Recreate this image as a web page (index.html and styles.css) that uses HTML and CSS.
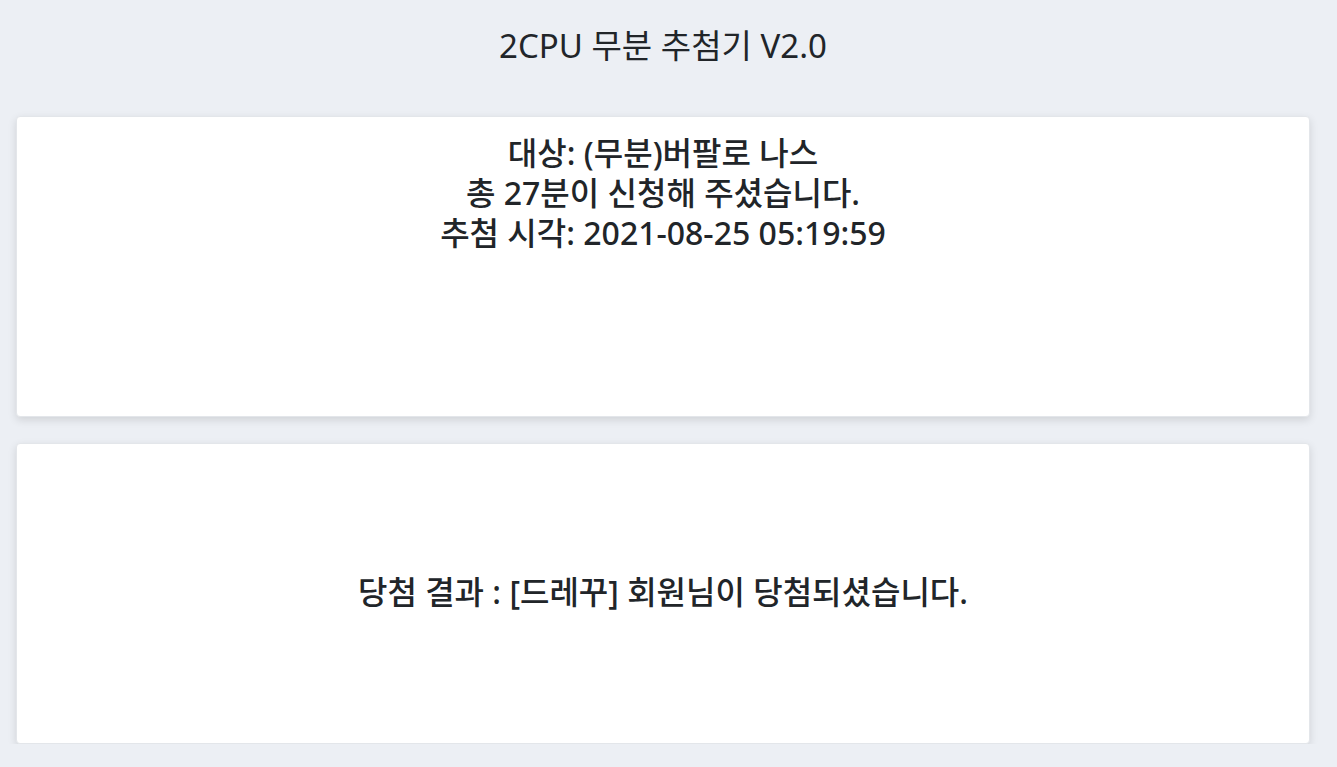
FILE: index.html
```html
<!DOCTYPE html>
<html lang="ko">
<head>
    <meta charset="UTF-8">
    <meta name="viewport" content="width=device-width, initial-scale=1.0">
    <title>2CPU 무분 추첨기 V2.0</title>
    <link rel="stylesheet" href="styles.css">
</head>
<body>
    <div class="wrap">
        <h1 class="title">2CPU 무분 추첨기 V2.0</h1>

        <div class="card info">
            <div>대상: (무분)버팔로 나스</div>
            <div>총 27분이 신청해 주셨습니다.</div>
            <div>추첨 시각: 2021-08-25 05:19:59</div>
        </div>

        <div class="card result">
            <div>당첨 결과 : [드레꾸] 회원님이 당첨되셨습니다.</div>
        </div>
    </div>
</body>
</html>
```

FILE: styles.css
```css
body {
    margin: 0;
    background-color: #eceff4;
    font-family: "Noto Sans", "Noto Sans CJK KR", sans-serif;
    color: #212529;
}
.wrap {
    margin-left: 16px;
    width: 1294px;
}
.title {
    margin: 0;
    padding: 24px 0 0 0;
    height: 90px;
    box-sizing: border-box;
    text-align: center;
    font-size: 33px;
    font-weight: 400;
    line-height: 44px;
}
.card {
    background-color: #fff;
    height: 301px;
    border-radius: 4px;
    border: 1px solid #e3e6ea;
    box-sizing: border-box;
    box-shadow: 0 3px 8px rgba(0,0,0,0.12);
    text-align: center;
    font-size: 32px;
    font-weight: 500;
}
.info {
    margin-top: 26px;
    padding-top: 16px;
    line-height: 40px;
}
.result {
    margin-top: 26px;
    padding-bottom: 8px;
    display: flex;
    align-items: center;
    justify-content: center;
}
```
